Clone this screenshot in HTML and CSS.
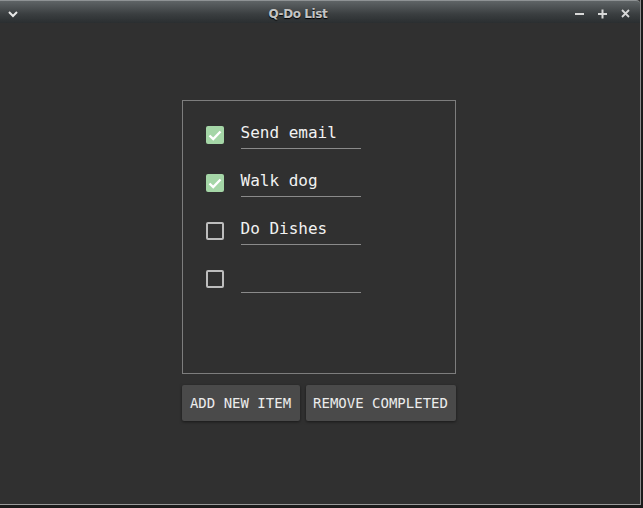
FILE: index.html
```html
<!DOCTYPE html>
<html>
<head>
<meta charset="utf-8">
<title>Q-Do List</title>
<link rel="stylesheet" href="styles.css">
</head>
<body>
<div class="window">
  <div class="titlebar">
    <svg class="tb-menu" width="12" height="8" viewBox="0 0 12 8"><polyline points="2,2 6,6 10,2" fill="none" stroke="#e8e8e8" stroke-width="2"/></svg>
    <div class="tb-title">Q-Do List</div>
    <div class="tb-controls">
      <svg width="11" height="11" viewBox="0 0 11 11"><rect x="1" y="5" width="9" height="2" fill="#d8d8d8"/></svg>
      <svg width="11" height="11" viewBox="0 0 11 11"><rect x="1" y="5" width="9" height="2" fill="#d8d8d8"/><rect x="4.5" y="1.5" width="2" height="9" fill="#d8d8d8"/></svg>
      <svg width="11" height="11" viewBox="0 0 11 11"><path d="M2 2 L9 9 M9 2 L2 9" stroke="#d8d8d8" stroke-width="1.8"/></svg>
    </div>
  </div>
  <div class="content">
    <div class="panel">
      <div class="row">
        <svg class="cb" width="18" height="18" viewBox="0 0 18 18"><rect width="18" height="18" rx="2" fill="#a5d6a7"/><polyline points="3.5,9.5 7.2,13 14.5,5.5" fill="none" stroke="#fff" stroke-width="2.4"/></svg>
        <div class="field">Send email</div>
      </div>
      <div class="row">
        <svg class="cb" width="18" height="18" viewBox="0 0 18 18"><rect width="18" height="18" rx="2" fill="#a5d6a7"/><polyline points="3.5,9.5 7.2,13 14.5,5.5" fill="none" stroke="#fff" stroke-width="2.4"/></svg>
        <div class="field">Walk dog</div>
      </div>
      <div class="row">
        <span class="cb cb-empty"></span>
        <div class="field">Do Dishes</div>
      </div>
      <div class="row">
        <span class="cb cb-empty"></span>
        <div class="field"></div>
      </div>
    </div>
    <div class="buttons">
      <button class="btn btn-add">ADD NEW ITEM</button>
      <button class="btn btn-remove">REMOVE COMPLETED</button>
    </div>
  </div>
</div>
</body>
</html>
```

FILE: styles.css
```css
html, body {
  margin: 0;
  padding: 0;
  background: #1a1a1a;
}
body {
  width: 643px;
  height: 508px;
  overflow: hidden;
}
.window {
  width: 640px;
  height: 504px;
  background: #303030;
  border-right: 1px solid #8a8a8a;
  border-bottom: 1px solid #9a9a9a;
  display: flex;
  flex-direction: column;
}
.titlebar {
  border-top: 1px solid #8e9294;
  border-top-right-radius: 4px;
  background: linear-gradient(#5f6466, #3a3e40 60%, #2a2e30);
  display: flex;
  align-items: center;
  padding-top: 3px;
  box-sizing: border-box;
  height: 23px;
  position: relative;
  flex-shrink: 0;
}
.tb-menu {
  margin-left: 7px;
}
.tb-title {
  position: absolute;
  left: 0;
  right: 0;
  top: 6px;
  text-align: center;
  font-family: "DejaVu Sans", sans-serif;
  font-size: 12px;
  font-weight: bold;
  color: #c4c4c4;
  text-shadow: 0 1px 1px #000;
  letter-spacing: -0.4px;
  padding-right: 44px;
}
.tb-controls {
  margin-left: auto;
  margin-right: 9px;
  display: flex;
  gap: 12px;
}
.content {
  flex: 1;
  display: flex;
  flex-direction: column;
  align-items: center;
  padding-top: 77px;
  padding-right: 3px;
}
.panel {
  border: 1px solid #7d7d7d;
  padding: 11px 0 0 0;
  box-sizing: border-box;
  width: 274px;
  height: 274px;
}
.row {
  height: 48px;
  display: flex;
  align-items: flex-start;
  padding-left: 23px;
}
.cb {
  margin-top: 14px;
  width: 18px;
  height: 18px;
  flex-shrink: 0;
  display: block;
  box-sizing: border-box;
}
.cb-empty {
  border: 2px solid #bdbdbd;
  border-radius: 2px;
}
.field {
  margin-left: 17px;
  width: 120px;
  padding: 11px 0 0 0;
  height: 25px;
  border-bottom: 1px solid #8a8a8a;
  font-family: "DejaVu Sans Mono", monospace;
  font-size: 16px;
  line-height: 20px;
  color: #f2f2f2;
  white-space: nowrap;
}
.buttons {
  display: flex;
  gap: 6px;
  margin-top: 11px;
}
.btn {
  height: 36px;
  border: none;
  border-radius: 2px;
  background: #4a4a4a;
  color: #ececec;
  font-family: "DejaVu Sans Mono", monospace;
  font-size: 14px;
  padding: 0;
  box-shadow: 0 1px 3px rgba(0, 0, 0, 0.5);
  text-align: center;
}
.btn-add {
  width: 118px;
}
.btn-remove {
  width: 150px;
}
```
